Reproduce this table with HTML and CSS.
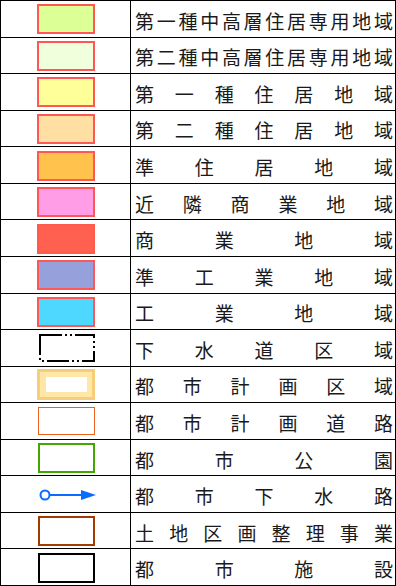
FILE: index.html
```html
<!DOCTYPE html>
<html lang="ja">
<head>
<meta charset="utf-8">
<link rel="stylesheet" href="styles.css">
</head>
<body>
<div class="legend">
  <div class="cell key"><div class="sw c1"></div></div>
  <div class="cell txt"><span>第</span><span>一</span><span>種</span><span>中</span><span>高</span><span>層</span><span>住</span><span>居</span><span>専</span><span>用</span><span>地</span><span>域</span></div>

  <div class="cell key"><div class="sw c2"></div></div>
  <div class="cell txt"><span>第</span><span>二</span><span>種</span><span>中</span><span>高</span><span>層</span><span>住</span><span>居</span><span>専</span><span>用</span><span>地</span><span>域</span></div>

  <div class="cell key"><div class="sw c3"></div></div>
  <div class="cell txt"><span>第</span><span>一</span><span>種</span><span>住</span><span>居</span><span>地</span><span>域</span></div>

  <div class="cell key"><div class="sw c4"></div></div>
  <div class="cell txt"><span>第</span><span>二</span><span>種</span><span>住</span><span>居</span><span>地</span><span>域</span></div>

  <div class="cell key"><div class="sw c5"></div></div>
  <div class="cell txt"><span>準</span><span>住</span><span>居</span><span>地</span><span>域</span></div>

  <div class="cell key"><div class="sw c6"></div></div>
  <div class="cell txt"><span>近</span><span>隣</span><span>商</span><span>業</span><span>地</span><span>域</span></div>

  <div class="cell key"><div class="sw c7"></div></div>
  <div class="cell txt"><span>商</span><span>業</span><span>地</span><span>域</span></div>

  <div class="cell key"><div class="sw c8"></div></div>
  <div class="cell txt"><span>準</span><span>工</span><span>業</span><span>地</span><span>域</span></div>

  <div class="cell key"><div class="sw c9"></div></div>
  <div class="cell txt"><span>工</span><span>業</span><span>地</span><span>域</span></div>

  <div class="cell key">
    <svg class="icon" width="60" height="32" viewBox="0 0 60 32">
      <path d="M3 3 H57 V29 H3 Z" fill="none" stroke="#000" stroke-width="2" stroke-dasharray="22 3 2 3 2 3"/>
    </svg>
  </div>
  <div class="cell txt"><span>下</span><span>水</span><span>道</span><span>区</span><span>域</span></div>

  <div class="cell key"><div class="plan"><div class="plan-in"></div></div></div>
  <div class="cell txt"><span>都</span><span>市</span><span>計</span><span>画</span><span>区</span><span>域</span></div>

  <div class="cell key"><div class="ol road"></div></div>
  <div class="cell txt"><span>都</span><span>市</span><span>計</span><span>画</span><span>道</span><span>路</span></div>

  <div class="cell key"><div class="ol park"></div></div>
  <div class="cell txt"><span>都</span><span>市</span><span>公</span><span>園</span></div>

  <div class="cell key">
    <svg class="icon" width="60" height="14" viewBox="0 0 60 14">
      <circle cx="8" cy="7" r="4.5" fill="#fff" stroke="#0a6cff" stroke-width="2"/>
      <line x1="12.5" y1="7" x2="46" y2="7" stroke="#0a6cff" stroke-width="2"/>
      <polygon points="44,2 59,7 44,12" fill="#0a6cff"/>
    </svg>
  </div>
  <div class="cell txt"><span>都</span><span>市</span><span>下</span><span>水</span><span>路</span></div>

  <div class="cell key"><div class="ol land"></div></div>
  <div class="cell txt"><span>土</span><span>地</span><span>区</span><span>画</span><span>整</span><span>理</span><span>事</span><span>業</span></div>

  <div class="cell key"><div class="ol fac"></div></div>
  <div class="cell txt"><span>都</span><span>市</span><span>施</span><span>設</span></div>
</div>
</body>
</html>
```

FILE: styles.css
```css
html, body {
  margin: 0;
  padding: 0;
  background: #fff;
}

.legend {
  box-sizing: border-box;
  width: 396px;
  height: 586px;
  padding: 1px;
  background: #000;
  display: grid;
  grid-template-columns: 129px 1fr;
  grid-template-rows: repeat(16, 1fr);
  gap: 1px;
}

.cell {
  background: #fff;
  display: flex;
  align-items: center;
  min-height: 0;
}

.key {
  justify-content: center;
  padding-top: 1px;
}

.txt {
  justify-content: space-between;
  padding: 3px 2px 0 4px;
  font-family: "Noto Sans CJK JP", "Noto Sans", sans-serif;
  font-size: 19px;
  line-height: 1;
  color: #1a1a1a;
}

.sw {
  box-sizing: border-box;
  width: 58px;
  height: 30px;
  border: 2px solid #ff5656;
}

.c1 { background: #dcff96; }
.c2 { background: #f0ffdc; }
.c3 { background: #ffff99; }
.c4 { background: #ffe0a2; }
.c5 { background: #ffc24c; }
.c6 { background: #ff9ee6; }
.c7 { background: #ff6050; border-color: #ff5a4a; }
.c8 { background: #96a1dc; }
.c9 { background: #4ed8ff; }

.icon {
  display: block;
  margin-left: 2px;
}

.plan {
  box-sizing: border-box;
  width: 58px;
  height: 31px;
  margin-left: 1px;
  border: 3px solid #f6cd78;
  background: #ffe7a8;
  display: flex;
  align-items: center;
  justify-content: center;
}

.plan-in {
  width: 41px;
  height: 15px;
  background: #fff;
}

.ol {
  box-sizing: border-box;
  width: 57px;
  height: 30px;
  margin-left: 2px;
  border: 2px solid #000;
  background: #fff;
}

.road { border-width: 1.5px; border-color: #ec6020; height: 28px; }
.park { border-color: #44a600; }
.land { border-color: #a33a00; }
.fac { border-color: #000; }
```
